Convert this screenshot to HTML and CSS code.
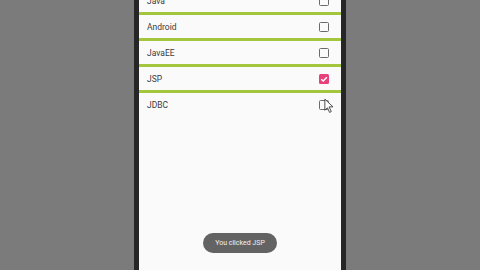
FILE: index.html
```html
<!DOCTYPE html>
<html lang="en">
<head>
<meta charset="UTF-8">
<meta name="viewport" content="width=device-width, initial-scale=1.0">
<title>Checkbox List</title>
<link rel="stylesheet" href="styles.css">
</head>
<body>
<div class="phone">
  <div class="screen">
    <div class="list">
      <div class="row"><span class="label">Java</span><span class="box"></span></div>
      <div class="row"><span class="label">Android</span><span class="box"></span></div>
      <div class="row"><span class="label">JavaEE</span><span class="box"></span></div>
      <div class="row"><span class="label">JSP</span><span class="box checked">
        <svg viewBox="0 0 10 10" width="10" height="10"><path d="M2.2 5.2 L4.2 7.1 L7.9 3.2" fill="none" stroke="#fff" stroke-width="1.4"/></svg>
      </span></div>
      <div class="row last"><span class="label">JDBC</span><span class="box"></span>
        <svg class="cursor" viewBox="0 0 14 18" width="12" height="16"><path d="M1 1 L1 14 L4 11 L6.5 16.5 L8.5 15.5 L6 10 L10.5 10 Z" fill="#fff" stroke="#333" stroke-width="1"/></svg>
      </div>
    </div>
    <div class="toast">You clicked JSP</div>
  </div>
</div>
</body>
</html>
```

FILE: styles.css
```css
body {
  margin: 0;
  height: 270px;
  background: #7b7b7b;
  display: flex;
  justify-content: center;
  overflow: hidden;
  font-family: Roboto, "Noto Sans", sans-serif;
}
.phone {
  width: 202px;
  height: 270px;
  border-left: 5px solid #262626;
  border-right: 5px solid #262626;
}
.screen {
  position: relative;
  height: 100%;
  background: #fafafa;
  overflow: hidden;
}
.list {
  margin-top: -11px;
}
.row {
  position: relative;
  height: 23px;
  display: flex;
  align-items: center;
  justify-content: space-between;
  padding: 0 12px 0 8px;
  border-bottom: 3px solid #a3c63c;
}
.row.last {
  border-bottom: none;
}
.label {
  font-size: 8.5px;
  color: #3a3a3a;
}
.box {
  width: 8px;
  height: 8px;
  border: 1.2px solid #6a6a6a;
  border-radius: 1.5px;
  display: flex;
  align-items: center;
  justify-content: center;
}
.box.checked {
  width: 10px;
  height: 10px;
  border: none;
  background: #e8407a;
}
.cursor {
  position: absolute;
  right: 5px;
  top: 5px;
}
.toast {
  position: absolute;
  left: 64px;
  top: 233px;
  width: 74px;
  height: 20px;
  border-radius: 10px;
  background: #636363;
  color: #f2f2f2;
  font-size: 7px;
  display: flex;
  align-items: center;
  justify-content: center;
}
```
